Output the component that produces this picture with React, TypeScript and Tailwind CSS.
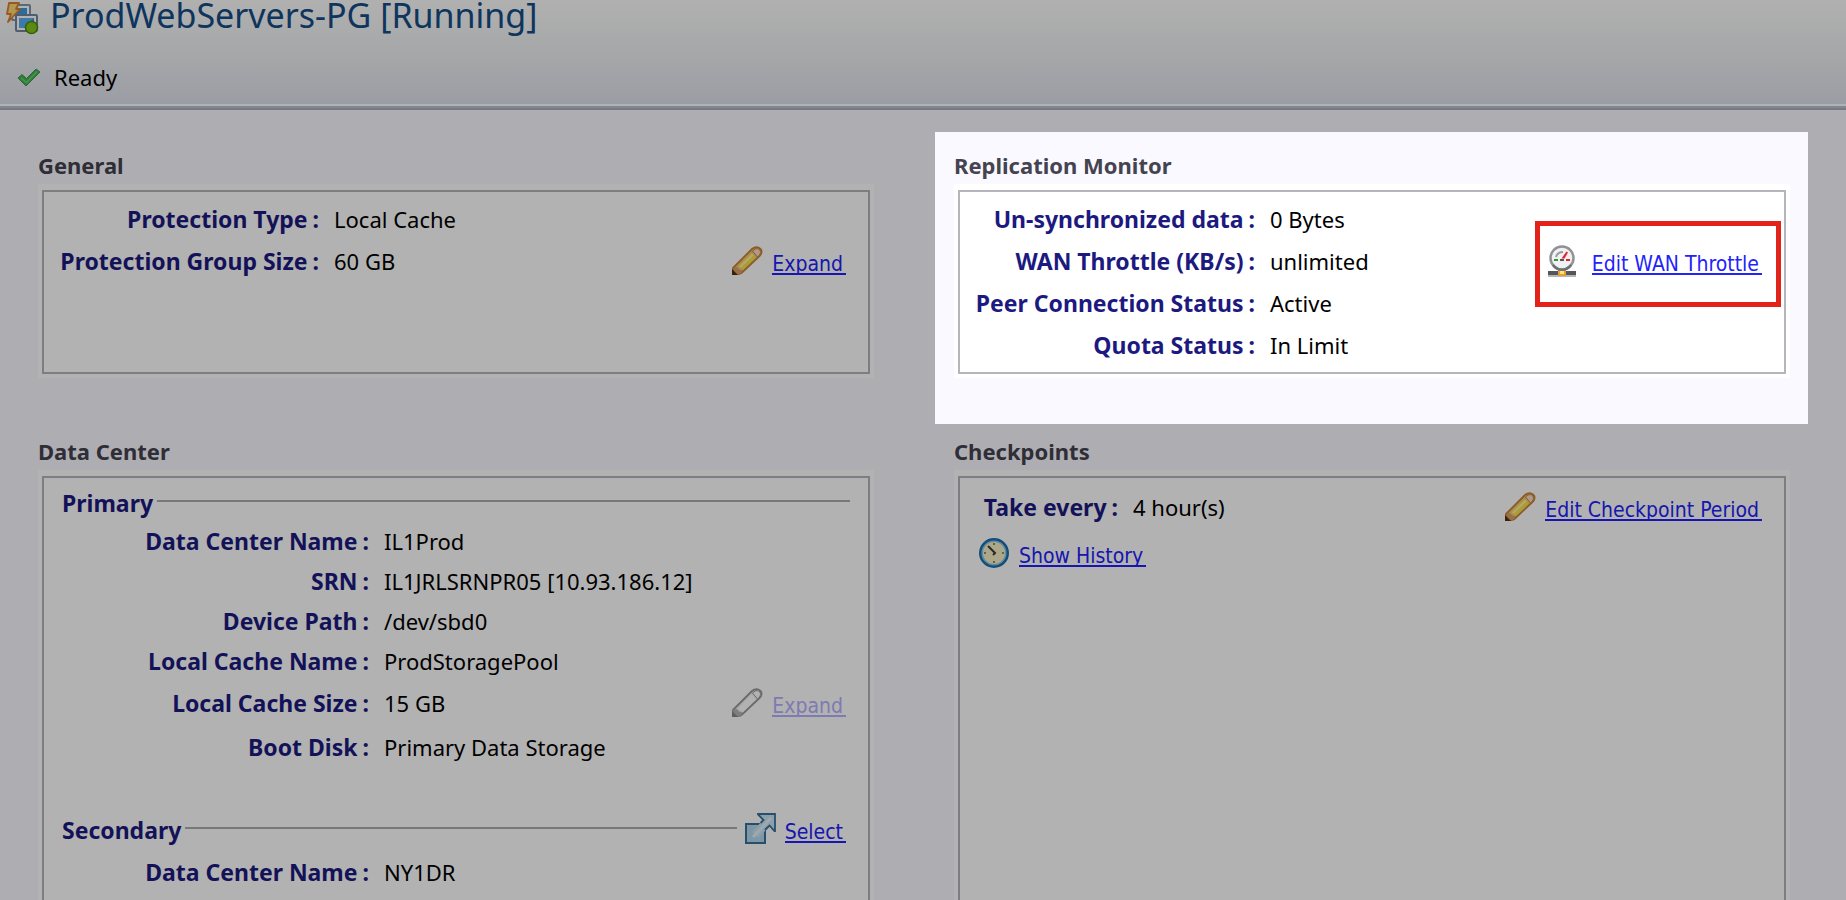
import type { ReactNode } from "react";

function GroupIcon() {
  return (
    <svg width="34" height="33" viewBox="0 0 34 33" aria-hidden="true">
      <rect x="6" y="3" width="18" height="15" rx="1" fill="#fff" stroke="#8296b0" strokeWidth="2" />
      <rect x="9" y="6" width="12" height="9" fill="#3d9be0" />
      <rect x="10" y="13" width="21" height="16" rx="1" fill="#fff" stroke="#71869f" strokeWidth="2" />
      <rect x="13" y="16" width="15" height="10" fill="#2f86dc" />
      <path d="M13 16h15L18 26h-5z" fill="#56b0f2" />
      <circle cx="25.500" cy="25.500" r="6" fill="#86c51c" stroke="#4b8a10" strokeWidth="1.600" />
      <path d="M3 1h10l-3 6h4L2 20l3-8H1z" fill="#ffd873" stroke="#d9822b" strokeWidth="1.800" strokeLinejoin="round" />
    </svg>
  );
}

function CheckIcon() {
  return (
    <svg width="24" height="19" viewBox="0 0 24 19" aria-hidden="true">
      <path d="M1 10l4-3.500 4.500 4L19 1l4 3L9 18z" fill="#45b154" stroke="#3a9a4a" strokeWidth="1" strokeLinejoin="round" />
      <path d="M4 10l5.500 4.500L20 3.500" fill="none" stroke="#6fd077" strokeWidth="1.500" />
    </svg>
  );
}

function PencilIcon({ muted = false }: { muted?: boolean }) {
  const edge = muted ? "#9a9a9a" : "#c88437";
  return (
    <svg width="32" height="30" viewBox="0 0 32 30" aria-hidden="true">
      <path d="M2 28v-6L21 3Q24 .5 27.500 1.500 31 3 30.500 6.500 30.500 8 28.500 10L11 26.500Q9.500 28 7 28z" fill={muted ? "#f4f4f4" : "#f3c67c"} stroke={edge} strokeWidth="1.800" strokeLinejoin="round" />
      <path d="M7 20.500L20.500 7l4.500 4.500L12 24z" fill={muted ? "#ffffff" : "#f8e04c"} />
      <path d="M9 21L22 8.500" stroke={muted ? "#fff" : "#fff3a0"} strokeWidth="1.800" />
      <path d="M21.500 5L24 3q3-1.500 5 1 1.500 2.500-.5 5L26.500 11z" fill={muted ? "#ffffff" : "#fbdcc8"} stroke={edge} strokeWidth="1" />
      <path d="M2.500 22l3.500-1 2 2.500 3 .5v2.500L8 28H2.500z" fill={muted ? "#b5b5b5" : "#d9a06a"} />
      <path d="M1 29v-6l6 6z" fill={muted ? "#888" : "#54300c"} />
    </svg>
  );
}

function GaugeIcon() {
  return (
    <svg width="28" height="33" viewBox="0 0 28 33" aria-hidden="true">
      <rect x="0" y="26" width="28" height="4" fill="#55565a" />
      <rect x="0" y="30" width="28" height="2" fill="#b5b5b8" />
      <rect x="10" y="24" width="8" height="7" fill="#e3a13a" />
      <rect x="12" y="26" width="4" height="3" fill="#ffe37a" />
      <circle cx="14" cy="13" r="11.500" fill="#f0f1f3" stroke="#909296" strokeWidth="2.500" />
      <path d="M5 20a11 11 0 0 0 18 0" fill="none" stroke="#6e7074" strokeWidth="2.500" />
      <path d="M8 12q1.500-5 7-5" fill="none" stroke="#9a9ca0" strokeWidth="2" />
      <rect x="6" y="14" width="4" height="2" fill="#2c9a35" />
      <rect x="18" y="14" width="4" height="2" fill="#e02424" />
      <path d="M13.500 13.500L18.500 6.500 20 7.500 16.500 13.500z" fill="#e0282c" />
      <path d="M12 15h4" stroke="#555" strokeWidth="2" />
    </svg>
  );
}

function ClockIcon() {
  return (
    <svg width="32" height="32" viewBox="0 0 32 32" aria-hidden="true">
      <circle cx="16" cy="16" r="13.500" fill="#f8f0c4" stroke="#1c70b0" strokeWidth="3" />
      <circle cx="16" cy="16" r="11.800" fill="none" stroke="#8cc4ea" strokeWidth="1.500" />
      <path d="M16 6v2M16 24v2M6 16h2M24 16h2" stroke="#8d8a74" strokeWidth="2" />
      <path d="M10 9l7 7-2 2" fill="none" stroke="#3c3c3c" strokeWidth="2" />
    </svg>
  );
}

function SelectIcon() {
  return (
    <svg width="31" height="32" viewBox="0 0 31 32" aria-hidden="true">
      <rect x="1" y="11" width="19" height="19" fill="#b4d8ee" stroke="#387099" strokeWidth="2" />
      <path d="M13 1h17v17l-5-5-12 12-6-6L18 7z" fill="#c8e4f5" />
      <path d="M8 24L26 5" stroke="#e2f2fb" strokeWidth="3" />
      <path d="M15.500 10L18.500 7 13 1.500V1h17v17h-.5L24.500 12.500 20 17" fill="none" stroke="#387099" strokeWidth="1.800" />
    </svg>
  );
}

function ActionLink({ icon, children, muted = false }: { icon: ReactNode; children: ReactNode; muted?: boolean }) {
  return (
    <a
      href="#"
      aria-disabled={muted || undefined}
      className={`flex items-center gap-[9px] whitespace-nowrap font-['DejaVu_Sans_Condensed','DejaVu_Sans',sans-serif] text-[21px] ${muted ? "text-[#b4b0ff]" : "text-[#2222fb]"}`}
    >
      {icon}
      <span className="mt-2 border-b-2 border-current pr-[3px] leading-[18px]">{children}</span>
    </a>
  );
}

function Row({ label, value, labelWidth, height = "h-[42px]", action }: { label: string; value: string; labelWidth: string; height?: string; action?: ReactNode }) {
  return (
    <div className={`flex items-center ${height}`}>
      <dt className={`flex shrink-0 justify-end gap-[5px] whitespace-nowrap text-[23px] font-bold text-[#1c1a80] ${labelWidth}`}>
        <span>{label}</span>
        <span>:</span>
      </dt>
      <dd className="ml-[15px] flex grow items-center justify-between whitespace-nowrap text-black">
        <span>{value}</span>
        {action}
      </dd>
    </div>
  );
}

function Panel({ title, lit = false, tall = false, children }: { title: string; lit?: boolean; tall?: boolean; children: ReactNode }) {
  return (
    <section
      className={`relative bg-[#faf9ff] pl-[19px] pr-[18px] ${lit ? "z-10 -mb-[6px] pb-[46px] shadow-[0_0_0_4000px_rgba(0,0,0,0.3)]" : "pb-10"}`}
    >
      <h2 className="flex h-[52px] items-center pt-[14px] font-bold text-[#44434f]">{title}</h2>
      <div className="bg-white px-1 pb-1 pt-[6px]">
        <div className={`border-2 border-[#b5b4bd] pl-[18px] pr-[22px] ${tall ? "min-h-[480px] pt-[3px]" : "min-h-[184px] pt-[6px]"}`}>
          {children}
        </div>
      </div>
    </section>
  );
}

function GroupTitle({ title, action }: { title: string; action?: ReactNode }) {
  return (
    <div className="flex h-10 items-center">
      <h3 className="pt-[3px] text-[23px] font-bold text-[#1c1a80]">{title}</h3>
      <div className={`ml-1 h-[2px] grow bg-[#adadad] ${action ? "mr-2" : "-mr-1"}`} />
      {action && <div className="pt-[2px]">{action}</div>}
    </div>
  );
}

export default function App() {
  return (
    <div className="flex h-screen flex-col overflow-hidden bg-[#faf9ff] font-['Noto_Sans','Open_Sans',sans-serif] text-[22px] leading-[30px]">
      <header className="shrink-0 border-b-2 border-[#aeafb5]">
        <div className="border-b-2 border-[#b3c4dc]">
          <div className="border-b-2 border-white bg-linear-to-b from-[#fdfdfc] via-[#eef0f2] to-[#dfe2ec]">
            <div className="flex h-9 items-start gap-[10px] pl-[6px]">
              <div className="pt-[2px]">
                <GroupIcon />
              </div>
              <h1 className="whitespace-nowrap text-[34px] leading-[30px] text-[#134c86]">ProdWebServers-PG [Running]</h1>
            </div>
            <div className="flex h-[68px] items-center gap-[13px] pl-[17px] pt-[14px]">
              <CheckIcon />
              <span>Ready</span>
            </div>
          </div>
        </div>
      </header>

      <main className="grid min-h-0 grow grid-cols-2 content-start gap-x-[43px] pl-[19px] pr-[38px] pt-[22px]">
        <Panel title="General">
          <dl>
            <Row label="Protection Type" value="Local Cache" labelWidth="w-[257px]" />
            <Row label="Protection Group Size" value="60 GB" labelWidth="w-[257px]" action={<ActionLink icon={<PencilIcon />}>Expand</ActionLink>} />
          </dl>
        </Panel>

        <Panel title="Replication Monitor" lit>
          <dl>
            <Row label="Un-synchronized data" value="0 Bytes" labelWidth="w-[277px]" />
            <Row
              label="WAN Throttle (KB/s)"
              value="unlimited"
              labelWidth="w-[277px]"
              action={
                <div className="relative">
                  <ActionLink icon={<span className="mr-[7px]"><GaugeIcon /></span>}>Edit WAN Throttle</ActionLink>
                  <div className="pointer-events-none absolute -bottom-[29px] -left-[13px] -right-[19px] -top-[24px] border-[5px] border-[#e2231a]" />
                </div>
              }
            />
            <Row label="Peer Connection Status" value="Active" labelWidth="w-[277px]" />
            <Row label="Quota Status" value="In Limit" labelWidth="w-[277px]" />
          </dl>
        </Panel>

        <Panel title="Data Center" tall>
          <GroupTitle title="Primary" />
          <dl>
            <Row label="Data Center Name" value="IL1Prod" labelWidth="w-[307px]" height="h-10" />
            <Row label="SRN" value="IL1JRLSRNPR05 [10.93.186.12]" labelWidth="w-[307px]" height="h-10" />
            <Row label="Device Path" value="/dev/sbd0" labelWidth="w-[307px]" height="h-10" />
            <Row label="Local Cache Name" value="ProdStoragePool" labelWidth="w-[307px]" height="h-10" />
            <Row label="Local Cache Size" value="15 GB" labelWidth="w-[307px]" height="h-11" action={<ActionLink muted icon={<PencilIcon muted />}>Expand</ActionLink>} />
            <Row label="Boot Disk" value="Primary Data Storage" labelWidth="w-[307px]" height="h-11" />
          </dl>
          <div className="mt-[39px]">
            <GroupTitle title="Secondary" action={<ActionLink icon={<SelectIcon />}>Select</ActionLink>} />
            <dl>
              <Row label="Data Center Name" value="NY1DR" labelWidth="w-[307px]" height="h-12" />
            </dl>
          </div>
        </Panel>

        <Panel title="Checkpoints" tall>
          <dl>
            <Row label="Take every" value="4 hour(s)" labelWidth="w-[140px]" height="h-[52px]" action={<ActionLink icon={<PencilIcon />}>Edit Checkpoint Period</ActionLink>} />
          </dl>
          <div className="flex h-10 items-center">
            <ActionLink icon={<ClockIcon />}>Show History</ActionLink>
          </div>
        </Panel>
      </main>
    </div>
  );
}
